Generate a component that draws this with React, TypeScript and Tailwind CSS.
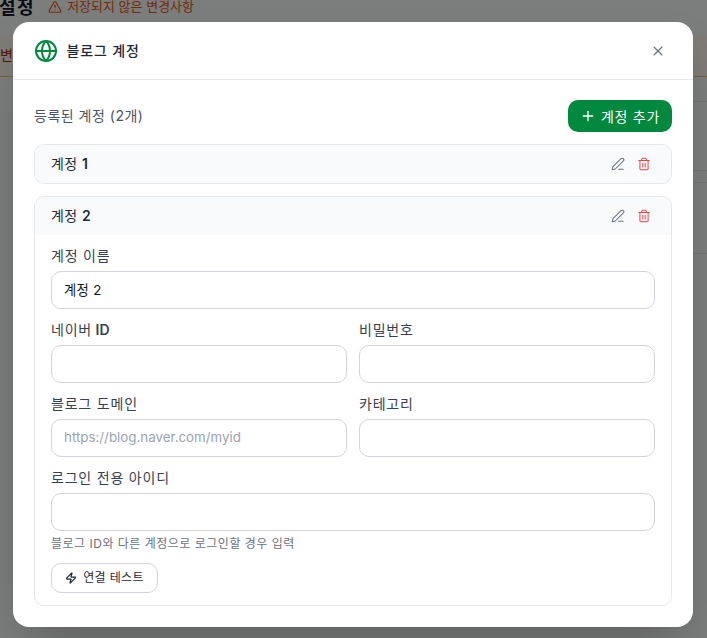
import { Globe, PenLine, Plus, Trash2, TriangleAlert, X, Zap } from 'lucide-react'

const FONT = "font-['Inter','Noto_Sans_CJK_KR',sans-serif]"

function Field({ label, latin, value, placeholder, hint }: { label: string; latin?: string; value?: string; placeholder?: string; hint?: string }) {
  return (
    <div className="flex min-w-0 flex-1 flex-col">
      <label className="mb-1 h-[20px] text-[14px] leading-[18px] font-normal tracking-[0.8px] text-[#374151]">
        {label}
        {latin ? <span className="font-semibold tracking-normal"> {latin}</span> : null}
      </label>
      <input
        readOnly
        value={value ?? ''}
        placeholder={placeholder}
        className="h-[38px] w-full rounded-[10px] border border-[#d1d5db] bg-white px-3 pb-[2px] text-[13.33px] tracking-[0.3px] text-[#111827] outline-none placeholder:tracking-normal placeholder:text-[#9ca3af]"
      />
      {hint ? <p className="mt-1 h-[16px] text-[12px] leading-[18px] tracking-[0.5px] text-[#6b7280]">{hint}</p> : null}
    </div>
  )
}

function AccountHeader({ name, num }: { name: string; num: string }) {
  return (
    <div className="flex h-[38px] items-center justify-between bg-[#f9fafb] pr-[20px] pl-4">
      <span className="-mt-[2px] text-[14px] tracking-[0.4px] text-[#1f2937]">
        {name} <span className="font-semibold">{num}</span>
      </span>
      <div className="-mt-[1px] flex items-center gap-[12px]">
        <PenLine size={14} strokeWidth={1.75} className="text-[#6b7280]" />
        <Trash2 size={14} strokeWidth={1.75} className="text-[#ef4444]" />
      </div>
    </div>
  )
}

export default function App() {
  return (
    <div className={`relative h-[638px] w-[707px] overflow-hidden bg-[#f9fafb] ${FONT}`}>
      {/* page behind the dialog */}
      <div className="flex h-[35px] items-start gap-[13px]">
        <h1 className="-mt-[6px] -ml-[1px] text-[18px] font-bold tracking-[1.5px] text-[#111827]">설정</h1>
        <span className="-mt-[3px] flex items-center gap-[5px] text-[13px] text-[#ea580c]">
          <TriangleAlert size={14} />
          저장되지 않은 변경사항
        </span>
      </div>
      <div className="h-[42px] border-b border-[#fdba74] bg-[#fff7ed] text-[14px] leading-[40px] text-[#9a3412]">변</div>
      <div className="ml-[20px] divide-y divide-[#e5e7eb]">
        <div className="h-[25px]" />
        <div className="h-[69px]" />
        <div className="h-[12px]" />
        <div className="h-[71px]" />
        <div className="h-[12px]" />
      </div>

      <div className="absolute inset-0 bg-black/50" />

      {/* dialog */}
      <div className="absolute top-[22px] left-[13px] h-[605px] w-[680px] rounded-2xl bg-white shadow-2xl">
        <div className="flex h-[58px] items-center justify-between border-b border-[#e5e7eb] pr-[27px] pl-[20.5px]">
          <div className="flex items-center gap-[9px]">
            <Globe size={24} strokeWidth={2} className="text-[#00883e]" />
            <h2 className="text-[14px] font-medium tracking-[0.85px] text-[#1f2937]">블로그 계정</h2>
          </div>
          <X size={16} strokeWidth={1.75} className="text-[#6b7280]" />
        </div>

        <div className="px-[21px] pt-5">
          <div className="mb-3 flex h-[32px] items-center justify-between">
            <span className="-mt-[2px] text-[14px] tracking-[0.5px] text-[#4b5563]">등록된 계정 (2개)</span>
            <button type="button" className="flex h-[32px] w-[104px] items-center justify-center gap-[5px] rounded-[10px] bg-[#00883e] text-[14px] tracking-[0.7px] text-white">
              <Plus size={16} strokeWidth={2} />
              계정 추가
            </button>
          </div>

          <div className="mb-3 overflow-hidden rounded-[10px] border border-[#e5e7eb]">
            <AccountHeader name="계정" num="1" />
          </div>

          <div className="overflow-hidden rounded-[10px] border border-[#e5e7eb]">
            <AccountHeader name="계정" num="2" />
            <div className="flex flex-col gap-3 p-4 pt-3 pb-3">
              <Field label="계정 이름" value="계정 2" />
              <div className="flex gap-3">
                <Field label="네이버" latin="ID" />
                <Field label="비밀번호" />
              </div>
              <div className="flex gap-3">
                <Field label="블로그 도메인" placeholder="https://blog.naver.com/myid" />
                <Field label="카테고리" />
              </div>
              <Field label="로그인 전용 아이디" hint="블로그 ID와 다른 계정으로 로그인할 경우 입력" />
              <button type="button" className="flex h-[30px] w-[107px] items-center justify-center gap-[6px] rounded-[10px] border border-[#d1d5db] bg-white text-[12px] tracking-[0.35px] text-[#1f2937]">
                <Zap size={12} strokeWidth={2.5} />
                연결 테스트
              </button>
            </div>
          </div>
        </div>
      </div>
    </div>
  )
}
